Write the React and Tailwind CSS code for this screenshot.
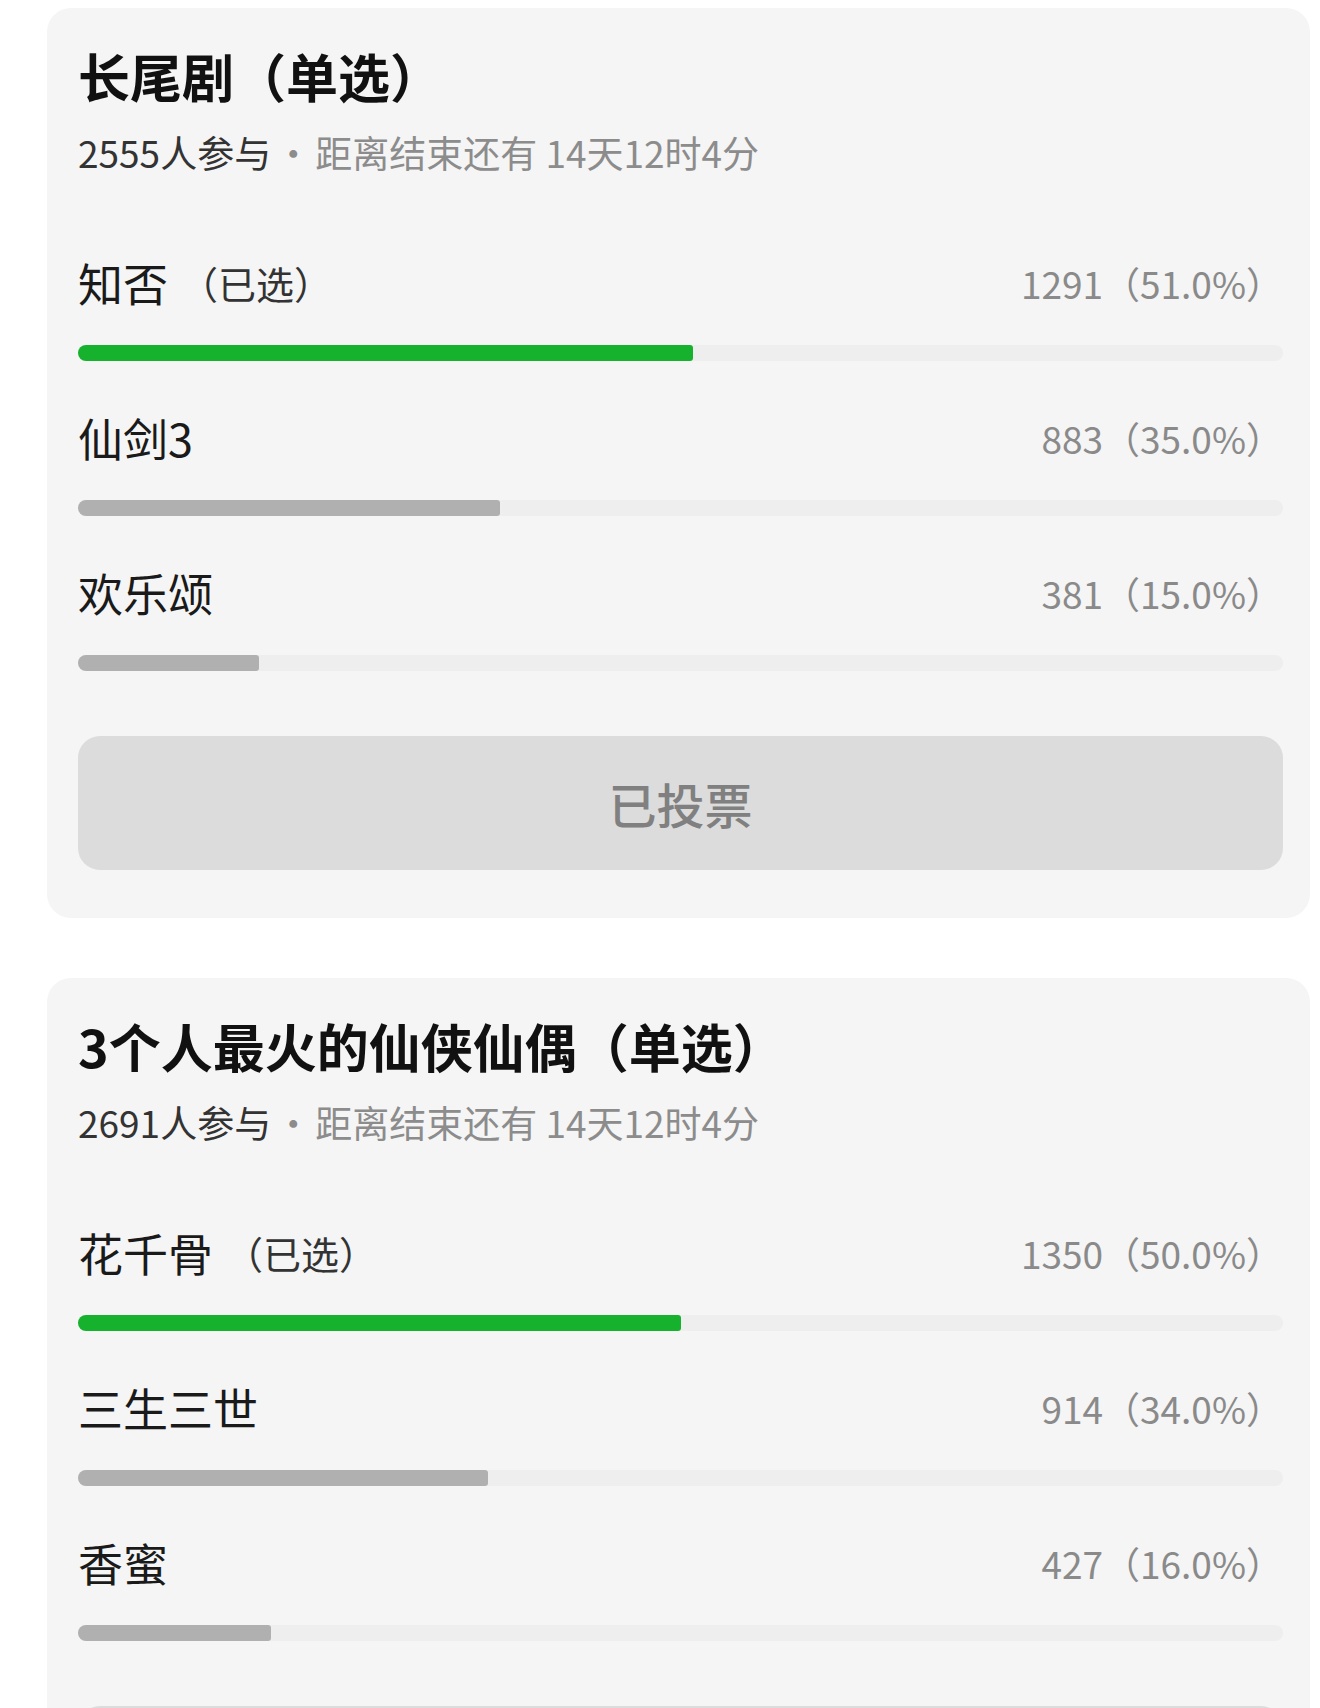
import React from "react"

const polls = [
  {
    title: "长尾剧（单选）",
    count: "2555",
    remain: "14天12时4分",
    options: [
      { name: "知否", votes: 1291, pct: 51.0, selected: true },
      { name: "仙剑3", votes: 883, pct: 35.0 },
      { name: "欢乐颂", votes: 381, pct: 15.0 },
    ],
  },
  {
    title: "3个人最火的仙侠仙偶（单选）",
    count: "2691",
    remain: "14天12时4分",
    options: [
      { name: "花千骨", votes: 1350, pct: 50.0, selected: true },
      { name: "三生三世", votes: 914, pct: 34.0 },
      { name: "香蜜", votes: 427, pct: 16.0 },
    ],
  },
]

const OptionRow = ({ option }) => {
  return (
    <div className="flex flex-col">
      <div className="flex h-[50px] items-center justify-between">
        <div className="flex items-center text-[#1a1a1a]">
          <span className="text-[45px] leading-[50px]">{ option.name }</span>
          { !option.selected ? null :
            <span className="ml-[12px] text-[38px] leading-[50px] text-[#333]">（已选）</span>
          }
        </div>
        <div className="text-[37px] leading-[50px] text-[#8a8a8a]">
          { option.votes }（{ option.pct.toFixed(1) }%）
        </div>
      </div>
      <div className="mt-[37px] h-[16px] w-full overflow-hidden rounded-full bg-[#eeeeee]">
        <div
          className={ `h-full rounded-r-[3px] ${ option.selected ? "bg-[#16b22e]" : "bg-[#b0b0b0]" }` }
          style={ { width: `${ option.pct }%` } }
        />
      </div>
    </div>
  )
}

const PollCard = ({ poll }) => {
  return (
    <div className="rounded-[24px] bg-[#f5f5f5] pb-[48px] pl-[31px] pr-[27px] pt-[38px]">
      <div className="h-[60px] text-[52px] font-bold leading-[60px] text-[#111]">
        { poll.title }
      </div>
      <div className="mt-[23px] flex h-[46px] items-center whitespace-nowrap text-[37px] leading-[46px]">
        <span className="text-[#333]">{ poll.count }人参与</span>
        <span className="inline-block w-[44px] text-center text-[#8c8c8c]">·</span>
        <span className="text-[#8c8c8c]">距离结束还有 { poll.remain }</span>
      </div>

      <div className="mt-[83px] flex flex-col gap-[52px]">
        { poll.options.map((o, i) =>
            <OptionRow option={ o } key={ i }/>
          )
        }
      </div>

      <div className="mt-[65px] flex h-[134px] items-center justify-center rounded-[22px] bg-[#dcdcdc]">
        <span className="text-[48px] font-medium text-[#808080]">已投票</span>
      </div>
    </div>
  )
}

export default function App() {
  return (
    <div className="h-[1708px] w-[1320px] overflow-hidden bg-white pl-[47px] pr-[10px] pt-[8px] font-['Noto_Sans_CJK_SC','PingFang_SC',sans-serif]">
      <div className="flex flex-col gap-[60px]">
        { polls.map((p, i) => <PollCard poll={ p } key={ i }/>) }
      </div>
    </div>
  )
}
